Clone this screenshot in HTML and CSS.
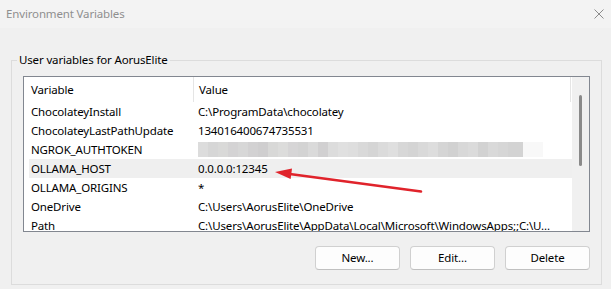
FILE: index.html
```html
<!DOCTYPE html>
<html lang="en">
<head>
<meta charset="utf-8">
<title>Environment Variables</title>
<link rel="stylesheet" href="styles.css">
</head>
<body>
<div class="window">
  <div class="titlebar">
    <span class="title">Environment Variables</span>
    <svg class="close" width="10" height="10" viewBox="0 0 10 10" aria-hidden="true">
      <path d="M0.5 0.5 L9.5 9.5 M9.5 0.5 L0.5 9.5" stroke="#8c8c8c" stroke-width="1" fill="none"/>
    </svg>
  </div>

  <fieldset class="group">
    <legend class="group-label">User variables for AorusElite</legend>

    <div class="list">
      <div class="list-main">
        <div class="list-header">
          <div class="hcol hvar">Variable</div>
          <div class="hcol hval">Value</div>
        </div>
        <div class="list-rows">
          <div class="row"><div class="cvar">ChocolateyInstall</div><div class="cval">C:\ProgramData\chocolatey</div></div>
          <div class="row"><div class="cvar">ChocolateyLastPathUpdate</div><div class="cval">134016400674735531</div></div>
          <div class="row"><div class="cvar">NGROK_AUTHTOKEN</div><div class="cval"><span class="redact"></span><span class="redact-fade"></span></div></div>
          <div class="row row-hover"><div class="cvar">OLLAMA_HOST</div><div class="cval">0.0.0.0:12345</div></div>
          <div class="row"><div class="cvar">OLLAMA_ORIGINS</div><div class="cval">*</div></div>
          <div class="row"><div class="cvar">OneDrive</div><div class="cval">C:\Users\AorusElite\OneDrive</div></div>
          <div class="row row-last"><div class="cvar">Path</div><div class="cval">C:\Users\AorusElite\AppData\Local\Microsoft\WindowsApps;;C:\U...</div></div>
        </div>
      </div>
      <div class="scrollbar"><div class="thumb"></div></div>
    </div>

    <div class="buttons">
      <button class="btn">New...</button>
      <button class="btn">Edit...</button>
      <button class="btn">Delete</button>
    </div>
  </fieldset>

  <svg class="annotation" width="611" height="289" viewBox="0 0 611 289" aria-hidden="true">
    <line x1="421" y1="191.5" x2="286" y2="173.5" stroke="#e0232b" stroke-width="2.6" stroke-linecap="round"/>
    <polygon points="275,172 292,168.6 290.6,179" fill="#e0232b"/>
  </svg>
</div>
</body>
</html>
```

FILE: styles.css
```css
* { box-sizing: border-box; }

html, body {
  margin: 0;
  padding: 0;
  background: #f0f0f0;
}

body {
  font-family: "Noto Sans", "Liberation Sans", sans-serif;
  font-size: 11.5px;
  letter-spacing: -0.15px;
  color: #000;
  width: 611px;
  height: 289px;
  overflow: hidden;
}

.window {
  position: relative;
  width: 611px;
  height: 289px;
}

.titlebar {
  height: 28px;
  background: #f3f3f3;
  display: flex;
  align-items: center;
  justify-content: space-between;
  padding: 0 7px 0 6px;
}

.title {
  color: #8f8f8f;
  line-height: 16px;
}

.close {
  display: block;
  margin-top: -1px;
}

.group {
  margin: 24px 9px 0 11px;
  padding: 8px 11px 14px 11px;
  border: 1px solid #dcdcdc;
  min-width: 0;
}

.group-label {
  padding: 0 2px;
  margin-left: -6px;
  line-height: 16px;
}

.list {
  display: flex;
  height: 156px;
  border: 1px solid #828790;
  background: #fff;
  overflow: hidden;
}

.list-main {
  width: 548px;
  flex: none;
  overflow: hidden;
}

.list-header {
  display: flex;
  height: 25px;
  align-items: stretch;
}

.hcol {
  display: flex;
  align-items: center;
  border-right: 1px solid #e5e5e5;
  line-height: 16px;
}

.hvar {
  width: 170px;
  padding-left: 7px;
}

.hval {
  width: 377px;
  padding-left: 5px;
}

.row {
  display: flex;
  height: 19px;
  margin-left: 5px;
  align-items: center;
  line-height: 16px;
  white-space: nowrap;
}

.row-last {
  align-items: flex-start;
  padding-top: 2px;
}

.row-hover {
  background: #efefef;
}

.cvar {
  width: 165px;
  flex: none;
  padding-left: 2px;
}

.cval {
  flex: 1;
  padding-left: 4px;
  display: flex;
  align-items: center;
  overflow: hidden;
}

.redact {
  display: block;
  width: 325px;
  height: 20px;
  margin-top: -5px;
  background: linear-gradient(90deg,
    #dcdcdc 0 10px, #d6d6d6 10px 20px, #d9d9d8 20px 30px, #d4d3d4 30px 40px,
    #d7d7d7 40px 50px, #d2d1d2 50px 60px, #cfcecf 60px 70px, #d8d8d7 70px 80px,
    #dcdcdb 80px 90px, #d6d5d6 90px 100px, #d3d3d3 100px 110px, #dadada 110px 120px,
    #d1d0d1 120px 130px, #dcdcdc 130px 140px, #e0e0e0 140px 150px, #dedede 150px 160px,
    #d9d9d9 160px 170px, #d5d5d5 170px 180px, #dbdbdb 180px 190px, #dfdfdf 190px 200px,
    #d7d7d7 200px 210px, #d4d4d4 210px 220px, #d9d9d9 220px 230px, #dddddd 230px 240px,
    #d5d5d5 240px 250px, #d1d1d1 250px 260px, #d8d8d8 260px 270px, #dbdbdb 270px 280px,
    #d2d2d2 280px 290px, #d9d9d9 290px 300px, #d6d6d6 300px 310px, #d3d3d3 310px 325px);
}

.redact-fade {
  display: block;
  width: 20px;
  height: 20px;
  margin-top: -5px;
  background: #f8f8f8;
}

.scrollbar {
  width: 17px;
  flex: none;
  background: #f0f0f0;
  padding: 18px 0 0 7px;
}

.thumb {
  width: 3px;
  height: 71px;
  border-radius: 2px;
  background: #8a8a8a;
}

.buttons {
  display: flex;
  justify-content: flex-end;
  gap: 10px;
  margin-top: 14px;
}

.btn {
  width: 85px;
  height: 24px;
  font-family: inherit;
  font-size: 11.5px;
  letter-spacing: -0.15px;
  color: #000;
  background: #fdfdfd;
  border: 1px solid #d0d0d0;
  border-bottom-color: #c0c0c0;
  border-radius: 4px;
  padding: 0;
  line-height: 16px;
}

.annotation {
  position: absolute;
  left: 0;
  top: 0;
  pointer-events: none;
}
```
